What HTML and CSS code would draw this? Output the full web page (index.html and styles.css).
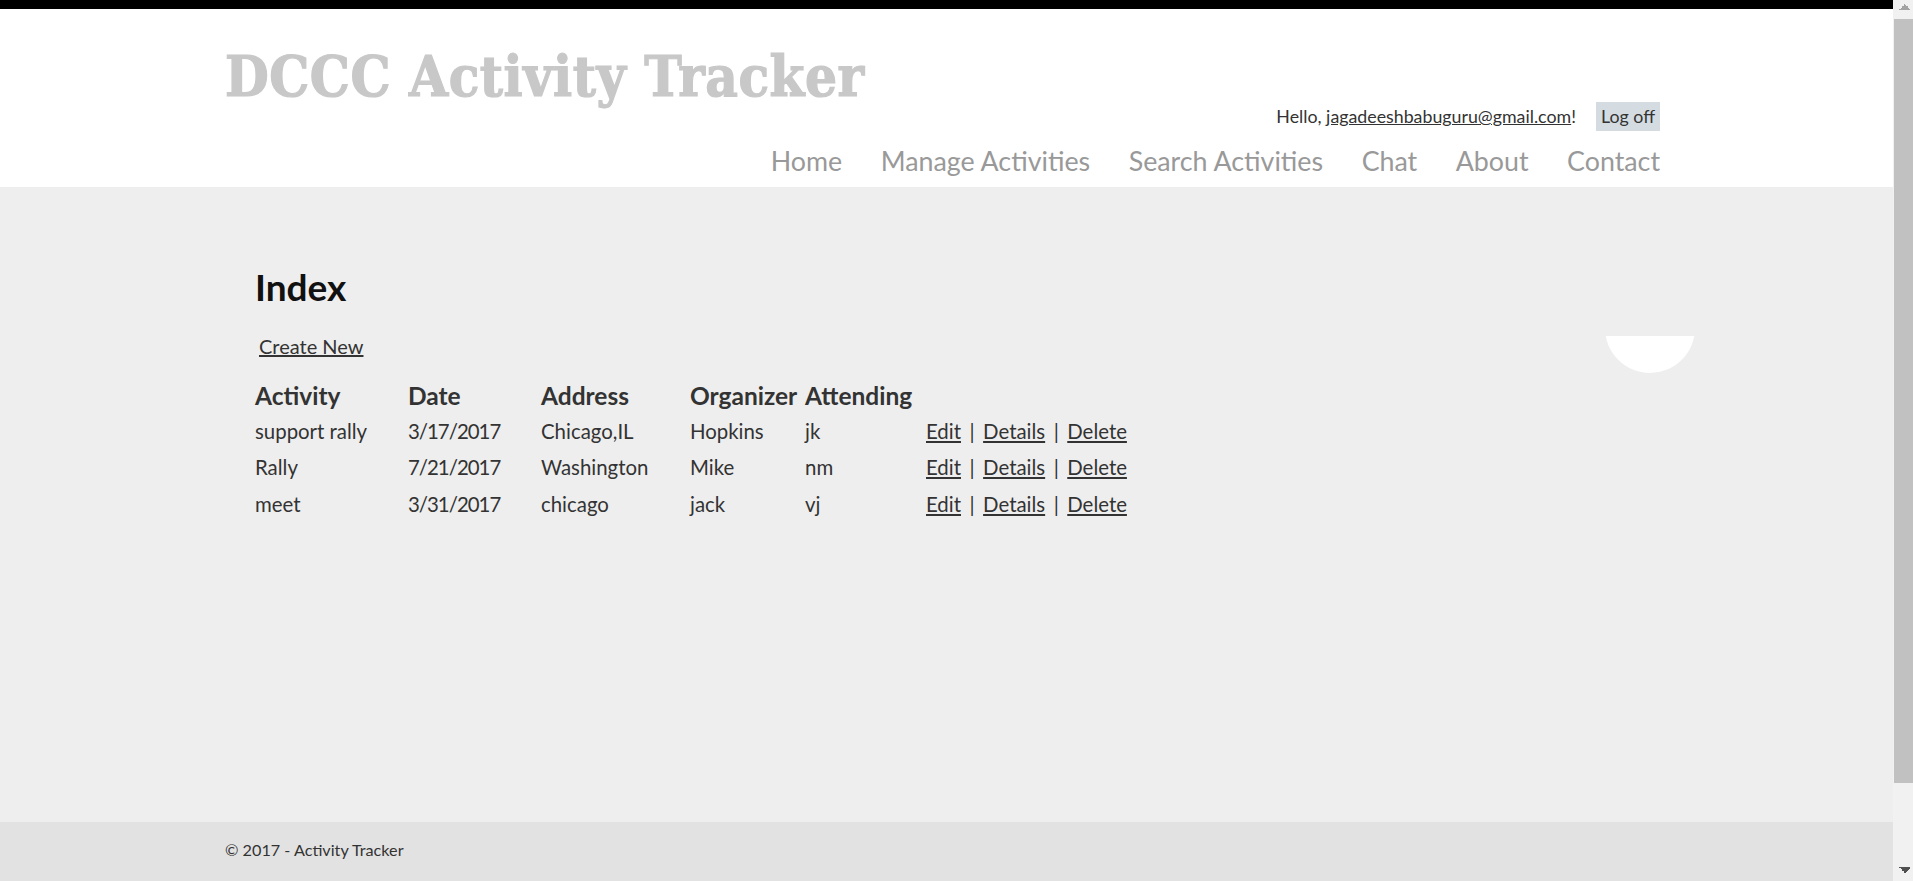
FILE: index.html
```html
<!DOCTYPE html>
<html lang="en">
<head>
<meta charset="utf-8">
<title>Index - Activity Tracker</title>
<link rel="stylesheet" href="styles.css">
</head>
<body>
<div class="page">
  <div class="site">
    <div class="topbar"></div>
    <header class="masthead">
      <div class="container">
        <div class="brand">DCCC Activity Tracker</div>
        <div class="login">
          <span class="hello">Hello, <a href="#" class="email">jagadeeshbabuguru@gmail.com</a>!</span>
          <a href="#" class="logoff">Log off</a>
        </div>
        <nav class="nav">
          <a href="#">Home</a>
          <a href="#">Manage Activities</a>
          <a href="#">Search Activities</a>
          <a href="#">Chat</a>
          <a href="#">About</a>
          <a href="#">Contact</a>
        </nav>
      </div>
    </header>
    <main class="body">
      <div class="container content">
        <h2 class="title">Index</h2>
        <p class="create"><a href="#">Create New</a></p>
        <table class="grid">
          <thead>
            <tr>
              <th class="c-activity">Activity</th>
              <th class="c-date">Date</th>
              <th class="c-address">Address</th>
              <th class="c-organizer">Organizer</th>
              <th class="c-attending">Attending</th>
              <th></th>
            </tr>
          </thead>
          <tbody>
            <tr>
              <td>support rally</td><td class="date">3/17/2017</td><td>Chicago,IL</td><td>Hopkins</td><td>jk</td>
              <td class="actions"><a href="#">Edit</a><span class="sep">|</span><a href="#">Details</a><span class="sep">|</span><a href="#">Delete</a></td>
            </tr>
            <tr>
              <td>Rally</td><td class="date">7/21/2017</td><td>Washington</td><td>Mike</td><td>nm</td>
              <td class="actions"><a href="#">Edit</a><span class="sep">|</span><a href="#">Details</a><span class="sep">|</span><a href="#">Delete</a></td>
            </tr>
            <tr>
              <td>meet</td><td class="date">3/31/2017</td><td>chicago</td><td>jack</td><td>vj</td>
              <td class="actions"><a href="#">Edit</a><span class="sep">|</span><a href="#">Details</a><span class="sep">|</span><a href="#">Delete</a></td>
            </tr>
          </tbody>
        </table>
      </div>
      <div class="blob"><div class="blob-circle"></div></div>
    </main>
    <footer class="footer">
      <div class="container">
        <p>&copy; 2017 - Activity Tracker</p>
      </div>
    </footer>
  </div>
  <div class="scrollbar">
    <div class="sb-btn sb-up"></div>
    <div class="sb-track"><div class="sb-thumb"></div></div>
    <div class="sb-btn sb-down"></div>
  </div>
</div>
</body>
</html>
```
FILE: styles.css
```css
html, body {
  margin: 0;
  padding: 0;
  height: 100%;
  overflow: hidden;
}

body {
  font-family: Lato, "Open Sans", sans-serif;
  color: #333;
  background: #eeeeee;
}

a {
  color: #333;
}

.page {
  display: flex;
  height: 100vh;
}

.site {
  flex: 1;
  min-width: 0;
  display: flex;
  flex-direction: column;
}

.topbar {
  height: 9px;
  background: #000;
  flex: none;
}

.container {
  width: 1443px;
  margin: 0 auto;
  box-sizing: border-box;
  padding-right: 8px;
}

/* header */
.masthead {
  background: #fff;
  padding: 37px 0 9px;
  flex: none;
}

.brand {
  font-family: "DejaVu Serif Condensed", "DejaVu Serif", serif;
  font-weight: 700;
  font-size: 56px;
  line-height: 60px;
  color: #c8c8c8;
  -webkit-text-stroke: 1.2px #c8c8c8;
  letter-spacing: 0.5px;
  margin-bottom: -4px;
  white-space: nowrap;
}

.login {
  display: flex;
  justify-content: flex-end;
  align-items: center;
  height: 29px;
  font-size: 17.8px;
}

.hello {
  line-height: 29px;
}

.email {
  color: #333;
  text-decoration: underline;
}

.logoff {
  margin-left: 20px;
  padding: 0 5px;
  line-height: 29px;
  background: #d4dce1;
  color: #333;
  text-decoration: none;
}

.nav {
  display: flex;
  justify-content: flex-end;
  gap: 38.5px;
  margin-top: 13px;
  font-size: 26.8px;
  line-height: 34px;
}

.nav a {
  color: #999;
  text-decoration: none;
}

/* body */
.body {
  flex: 1;
  position: relative;
  background: #eeeeee;
}

.content {
  padding-top: 79px;
  padding-left: 30px;
}

.title {
  margin: 0;
  font-size: 37px;
  line-height: 41px;
  font-weight: 700;
  color: #111;
}

.create {
  margin: 25px 0 0 4px;
  font-size: 20px;
  line-height: 28px;
}

.grid {
  margin-top: 18.5px;
  border-collapse: collapse;
}

.grid th {
  padding: 0;
  text-align: left;
  font-size: 24.5px;
  line-height: 34px;
  font-weight: 700;
  color: #333;
  white-space: nowrap;
}

.grid td {
  padding: 0;
  font-size: 20.4px;
  line-height: 36.7px;
  white-space: nowrap;
}

.grid td.date {
  letter-spacing: -1px;
}

.c-activity { width: 153px; }
.c-date { width: 133px; }
.c-address { width: 149px; }
.c-organizer { width: 115px; }
.c-attending { width: 121px; }

.actions .sep {
  padding: 0 8.5px;
}

.blob {
  position: absolute;
  top: 149px;
  left: 1605px;
  width: 90px;
  height: 37px;
  overflow: hidden;
}

.blob-circle {
  width: 90px;
  height: 90px;
  margin-top: -53px;
  border-radius: 50%;
  background: #fff;
}

/* footer */
.footer {
  flex: none;
  height: 59px;
  background: #e2e2e2;
}

.footer .container {
  padding-top: 18px;
}

.footer p {
  margin: 0;
  font-size: 16.2px;
  line-height: 20px;
}

/* scrollbar */
.scrollbar {
  flex: none;
  width: 20px;
  display: flex;
  flex-direction: column;
  background: #f1f1f1;
}

.sb-btn {
  flex: none;
}

.sb-up {
  height: 19px;
  background:
    linear-gradient(to bottom right, transparent 50%, #a3a3a3 50%) 6px 4px / 6px 6px no-repeat,
    linear-gradient(to bottom left, transparent 50%, #a3a3a3 50%) 12px 4px / 6px 6px no-repeat;
}

.sb-down {
  height: 20px;
  background:
    linear-gradient(to top right, transparent 50%, #505050 50%) 6px 6px / 6px 6px no-repeat,
    linear-gradient(to top left, transparent 50%, #505050 50%) 12px 6px / 6px 6px no-repeat;
}

.sb-track {
  flex: 1;
}

.sb-thumb {
  height: 764px;
  margin-left: 1px;
  background: #c1c1c1;
}
```
